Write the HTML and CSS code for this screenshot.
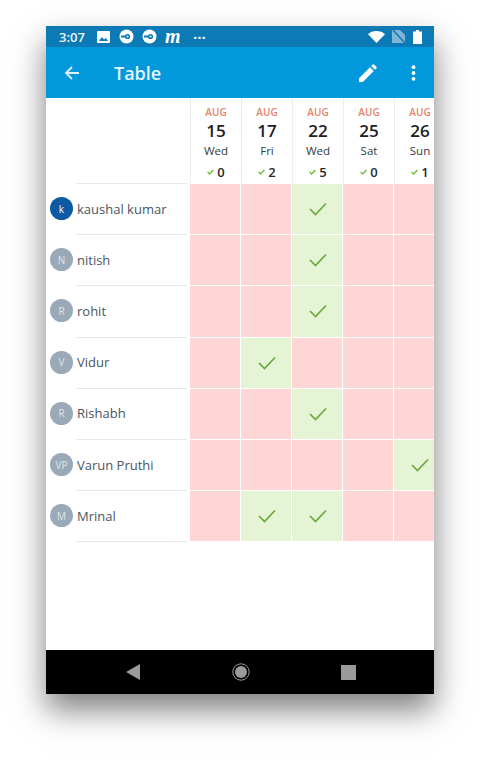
FILE: index.html
```html
<!DOCTYPE html>
<html lang="en">
<head>
    <meta charset="UTF-8">
    <meta name="viewport" content="width=device-width, initial-scale=1.0">
    <title>Table</title>
    <link rel="stylesheet" href="styles.css">
</head>
<body>
    <div class="phone">
        <div class="status-bar">
            <span class="time">3:07</span>
            <svg class="st-icon" width="13" height="12" viewBox="0 0 13 12"><rect width="13" height="12" rx="1" fill="#fff"/><path d="M2 10l3-4 2 2.5 2-1.5 2 3z" fill="#0b7ab5"/></svg>
            <svg class="st-icon" width="15" height="15" viewBox="0 0 15 15"><circle cx="7.5" cy="7.5" r="7" fill="#fff"/><rect x="2" y="6.5" width="8" height="2" fill="#0b7ab5"/><circle cx="8.5" cy="7.5" r="2.6" fill="#0b7ab5"/><circle cx="8.5" cy="7.5" r="1" fill="#fff"/></svg>
            <svg class="st-icon" width="15" height="15" viewBox="0 0 15 15"><circle cx="7.5" cy="7.5" r="7" fill="#fff"/><rect x="2" y="6.5" width="8" height="2" fill="#0b7ab5"/><circle cx="8.5" cy="7.5" r="2.6" fill="#0b7ab5"/><circle cx="8.5" cy="7.5" r="1" fill="#fff"/></svg>
            <span class="m-logo">m</span>
            <span class="dots">···</span>
            <span class="spacer"></span>
            <svg width="17" height="12" viewBox="0 0 17 12"><path d="M0 3.2C2.2 1.2 5.2 0 8.5 0s6.300 1.200 8.500 3.200L8.500 12z" fill="#fff"/></svg>
            <svg class="no-sim" width="13" height="13" viewBox="0 0 13 13"><path d="M0 0h8l5 5v8H0z" fill="#7fb6d6"/><path d="M1 0l12 13" stroke="#0b7ab5" stroke-width="1.500"/></svg>
            <svg class="battery" width="9" height="14" viewBox="0 0 9 14"><path d="M3 0h3v1.500h3V14H0V1.500h3z" fill="#fff"/></svg>
        </div>

        <div class="app-bar">
            <svg class="back" width="16" height="16" viewBox="0 0 16 16"><path d="M15 8H2M8 2L2 8l6 6" fill="none" stroke="#dff1fb" stroke-width="1.800"/></svg>
            <h1>Table</h1>
            <svg class="edit" width="18" height="18" viewBox="0 0 18 18"><path d="M0 18v-3.800L11 3.200 14.800 7 3.800 18zM12.200 2l1.500-1.500a1 1 0 0 1 1.400 0l2.400 2.400a1 1 0 0 1 0 1.400L16 5.800z" fill="#fff"/></svg>
            <svg class="more" width="5" height="16" viewBox="0 0 5 16"><circle cx="2.500" cy="2.200" r="1.900" fill="#fff"/><circle cx="2.500" cy="8" r="1.900" fill="#fff"/><circle cx="2.500" cy="13.800" r="1.900" fill="#fff"/></svg>
        </div>

        <div class="table">
            <div class="row head">
                <div class="name-col"></div>
                <div class="day"><span class="mon">AUG</span><span class="num">15</span><span class="wd">Wed</span><span class="count"><svg class="tick-sm" viewBox="0 0 8 6"><path d="M.7 3l2.300 2.200L7.300.8"/></svg>0</span></div>
                <div class="day"><span class="mon">AUG</span><span class="num">17</span><span class="wd">Fri</span><span class="count"><svg class="tick-sm" viewBox="0 0 8 6"><path d="M.7 3l2.300 2.200L7.300.8"/></svg>2</span></div>
                <div class="day"><span class="mon">AUG</span><span class="num">22</span><span class="wd">Wed</span><span class="count"><svg class="tick-sm" viewBox="0 0 8 6"><path d="M.7 3l2.300 2.200L7.300.8"/></svg>5</span></div>
                <div class="day"><span class="mon">AUG</span><span class="num">25</span><span class="wd">Sat</span><span class="count"><svg class="tick-sm" viewBox="0 0 8 6"><path d="M.7 3l2.300 2.200L7.300.8"/></svg>0</span></div>
                <div class="day"><span class="mon">AUG</span><span class="num">26</span><span class="wd">Sun</span><span class="count"><svg class="tick-sm" viewBox="0 0 8 6"><path d="M.7 3l2.300 2.200L7.300.8"/></svg>1</span></div>
            </div>

            <div class="row">
                <div class="name-col"><span class="avatar active">k</span><span class="name">kaushal kumar</span></div>
                <div class="cell"></div>
                <div class="cell"></div>
                <div class="cell yes"><svg class="tick" viewBox="0 0 18 14"><path d="M1 7l5.500 5.500L17 1.500"/></svg></div>
                <div class="cell"></div>
                <div class="cell"></div>
            </div>
            <div class="row">
                <div class="name-col"><span class="avatar">N</span><span class="name">nitish</span></div>
                <div class="cell"></div>
                <div class="cell"></div>
                <div class="cell yes"><svg class="tick" viewBox="0 0 18 14"><path d="M1 7l5.500 5.500L17 1.500"/></svg></div>
                <div class="cell"></div>
                <div class="cell"></div>
            </div>
            <div class="row">
                <div class="name-col"><span class="avatar">R</span><span class="name">rohit</span></div>
                <div class="cell"></div>
                <div class="cell"></div>
                <div class="cell yes"><svg class="tick" viewBox="0 0 18 14"><path d="M1 7l5.500 5.500L17 1.500"/></svg></div>
                <div class="cell"></div>
                <div class="cell"></div>
            </div>
            <div class="row">
                <div class="name-col"><span class="avatar">V</span><span class="name">Vidur</span></div>
                <div class="cell"></div>
                <div class="cell yes"><svg class="tick" viewBox="0 0 18 14"><path d="M1 7l5.500 5.500L17 1.500"/></svg></div>
                <div class="cell"></div>
                <div class="cell"></div>
                <div class="cell"></div>
            </div>
            <div class="row">
                <div class="name-col"><span class="avatar">R</span><span class="name">Rishabh</span></div>
                <div class="cell"></div>
                <div class="cell"></div>
                <div class="cell yes"><svg class="tick" viewBox="0 0 18 14"><path d="M1 7l5.500 5.500L17 1.500"/></svg></div>
                <div class="cell"></div>
                <div class="cell"></div>
            </div>
            <div class="row">
                <div class="name-col"><span class="avatar">VP</span><span class="name">Varun Pruthi</span></div>
                <div class="cell"></div>
                <div class="cell"></div>
                <div class="cell"></div>
                <div class="cell"></div>
                <div class="cell yes"><svg class="tick" viewBox="0 0 18 14"><path d="M1 7l5.500 5.500L17 1.500"/></svg></div>
            </div>
            <div class="row">
                <div class="name-col"><span class="avatar">M</span><span class="name">Mrinal</span></div>
                <div class="cell"></div>
                <div class="cell yes"><svg class="tick" viewBox="0 0 18 14"><path d="M1 7l5.500 5.500L17 1.500"/></svg></div>
                <div class="cell yes"><svg class="tick" viewBox="0 0 18 14"><path d="M1 7l5.500 5.500L17 1.500"/></svg></div>
                <div class="cell"></div>
                <div class="cell"></div>
            </div>
        </div>

        <div class="nav-bar">
            <svg width="14" height="16" viewBox="0 0 14 16"><path d="M14 0v16L0 8z" fill="#9a9a9a"/></svg>
            <svg width="18" height="18" viewBox="0 0 18 18"><circle cx="9" cy="9" r="8.200" fill="none" stroke="#9a9a9a" stroke-width="1"/><circle cx="9" cy="9" r="6" fill="#9a9a9a"/></svg>
            <svg width="15" height="15" viewBox="0 0 15 15"><rect width="15" height="15" fill="#9a9a9a"/></svg>
        </div>
    </div>
</body>
</html>
```

FILE: styles.css
```css
html, body {
    height: 760px;
}

body {
    margin: 0;
    padding: 26px 46px 0;
    box-sizing: border-box;
    background: #fff;
    overflow: hidden;
    font-family: "Open Sans", "Noto Sans", sans-serif;
}

.phone {
    width: 388px;
    height: 668px;
    display: flex;
    flex-direction: column;
    background: #fff;
    box-shadow: 0 16px 30px rgba(0,0,0,0.5);
}

.status-bar {
    height: 21px;
    flex: none;
    display: flex;
    align-items: center;
    padding: 0 12px 0 13px;
    background: #0b7ab5;
    color: #f0f7fb;
}

.time {
    font-size: 13px;
    font-weight: 600;
    width: 38px;
}

.st-icon {
    margin-right: 8px;
}

.st-icon:first-of-type {
    margin-right: 9px;
}

.m-logo {
    font-family: "Liberation Serif", serif;
    font-style: italic;
    font-weight: bold;
    font-size: 20px;
    line-height: 15px;
    width: 28px;
    color: #fff;
}

.dots {
    font-size: 15px;
    font-weight: bold;
}

.spacer {
    flex: 1;
}

.no-sim {
    margin: 0 8px 0 7px;
}

.app-bar {
    height: 51px;
    flex: none;
    display: flex;
    align-items: center;
    background: #0398dc;
    color: #e6f5fc;
    padding: 0 18px;
}

.app-bar h1 {
    flex: 1;
    margin: 0 0 0 34px;
    font-size: 18px;
    font-weight: 600;
}

.edit {
    margin-right: 34px;
}

.table {
    flex: 1;
    overflow: hidden;
}

.row {
    display: grid;
    grid-template-columns: 144px repeat(5, 51px);
    height: 51.2px;
}

.row.head {
    height: 86px;
}

.name-col {
    display: flex;
    align-items: center;
    gap: 4px;
    padding: 0 0 2px 4px;
    position: relative;
}

.row .name-col::after {
    content: "";
    position: absolute;
    left: 30px;
    right: 3px;
    bottom: 0;
    height: 1px;
    background: #e6e8ea;
}

.avatar {
    width: 23px;
    height: 23px;
    flex: none;
    border-radius: 50%;
    background: #9aa9b8;
    color: #dfe5ea;
    font-size: 10px;
    display: flex;
    align-items: center;
    justify-content: center;
}

.avatar.active {
    background: #0b5aa2;
    color: #fff;
}

.name {
    font-size: 13px;
    color: #4a5560;
}

.day {
    display: flex;
    flex-direction: column;
    align-items: center;
    border-left: 1px solid #eeeeee;
}

.mon {
    margin-top: 8px;
    font-size: 10px;
    line-height: 12px;
    font-weight: 600;
    color: #e8836b;
}

.num {
    margin-top: 3px;
    font-size: 17px;
    line-height: 20px;
    font-weight: 600;
    color: #1c2024;
}

.wd {
    margin-top: 2px;
    font-size: 11.5px;
    line-height: 15px;
    color: #333a40;
}

.count {
    display: flex;
    align-items: center;
    gap: 3px;
    margin-top: 6px;
    font-size: 13px;
    line-height: 16px;
    font-weight: 600;
    color: #24292e;
}

.tick-sm {
    width: 7px;
    height: 6px;
    fill: none;
    stroke: #6bbf3a;
    stroke-width: 1.600;
}

.cell {
    background: #ffd6d6;
    border: solid #fff;
    border-width: 0 1px 1px 0;
    padding-left: 1px;
    display: flex;
    align-items: center;
    justify-content: center;
}

.cell.yes {
    background: #e6f4d6;
}

.tick {
    width: 18px;
    height: 14px;
    fill: none;
    stroke: #6aa93c;
    stroke-width: 1.700;
}

.nav-bar {
    height: 44px;
    flex: none;
    display: flex;
    align-items: center;
    background: #000;
    padding: 0 78px 0 80px;
    justify-content: space-between;
}
```
